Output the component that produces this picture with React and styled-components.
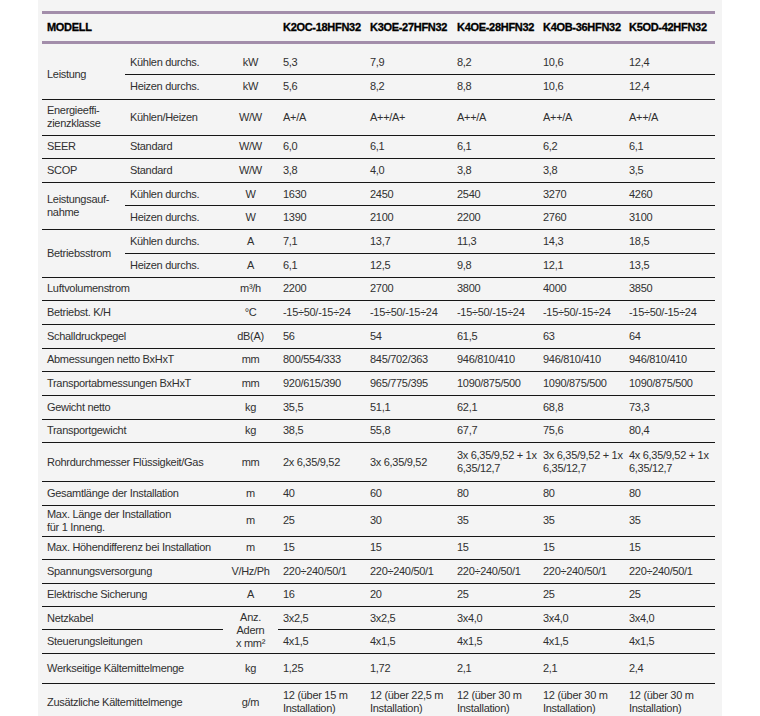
import React from 'react'
import styled, { createGlobalStyle } from 'styled-components'

const GlobalStyle = createGlobalStyle`
    * {
        box-sizing: border-box;
    }
    body {
        margin: 0;
        background: #fff;
        font-family: "Liberation Sans", Arial, sans-serif;
    }
`

const Panel = styled.div`
    margin-left: 38px;
    width: 684px;
    min-height: 100vh;
    background: #f4f4f4;
    padding: 11px 7px 0 4px;
`

const Table = styled.table`
    width: 100%;
    table-layout: fixed;
    border-collapse: separate;
    border-spacing: 0;
    font-size: 11px;
    line-height: 13px;
    letter-spacing: -0.3px;
    color: #303030;
`

const HeadRow = styled.tr`
    height: 33px;
`

const Th = styled.th`
    border-top: 3px solid #a28daa;
    border-bottom: 3px solid #a28daa;
    padding: 0 0 0 5px;
    text-align: left;
    font-weight: 700;
    color: #000;
    letter-spacing: -0.3px;
    -webkit-text-stroke: 0.3px #000;
    white-space: nowrap;
`

const Row = styled.tr`
    height: ${p => p.$h}px;
`

const Td = styled.td`
    border-bottom: 1px solid #161616;
    padding: ${p => (p.$first ? '6px' : '0')} 0 0 5px;
    vertical-align: middle;
    white-space: nowrap;
    text-align: ${p => (p.$center ? 'center' : 'left')};
    ${p => p.$center && 'padding-left: 0;'}
`

const models = ['K2OC-18HFN32', 'K3OE-27HFN32', 'K4OE-28HFN32', 'K4OB-36HFN32', 'K5OD-42HFN32']

const over = n => (
    <>
        12 (über {n} m
        <br />
        Installation)
    </>
)

const pipe = n => (
    <>
        {n}x 6,35/9,52 + 1x
        <br />
        6,35/12,7
    </>
)

const rows = [
    { label: 'Leistung', span: 2, sub: 'Kühlen durchs.', unit: 'kW', v: ['5,3', '7,9', '8,2', '10,6', '12,4'], h: 31, first: true },
    { sub: 'Heizen durchs.', unit: 'kW', v: ['5,6', '8,2', '8,8', '10,6', '12,4'], h: 24.5 },
    { label: <>Energieeffi-<br />zienzklasse</>, sub: 'Kühlen/Heizen', unit: 'W/W', v: ['A+/A', 'A++/A+', 'A++/A', 'A++/A', 'A++/A'], h: 36 },
    { label: 'SEER', sub: 'Standard', unit: 'W/W', v: ['6,0', '6,1', '6,1', '6,2', '6,1'], h: 23.5 },
    { label: 'SCOP', sub: 'Standard', unit: 'W/W', v: ['3,8', '4,0', '3,8', '3,8', '3,5'] },
    { label: <>Leistungsauf-<br />nahme</>, span: 2, sub: 'Kühlen durchs.', unit: 'W', v: ['1630', '2450', '2540', '3270', '4260'] },
    { sub: 'Heizen durchs.', unit: 'W', v: ['1390', '2100', '2200', '2760', '3100'] },
    { label: 'Betriebsstrom', span: 2, sub: 'Kühlen durchs.', unit: 'A', v: ['7,1', '13,7', '11,3', '14,3', '18,5'], h: 24 },
    { sub: 'Heizen durchs.', unit: 'A', v: ['6,1', '12,5', '9,8', '12,1', '13,5'], h: 23.5 },
    { label: 'Luftvolumenstrom', wide: true, unit: 'm³/h', v: ['2200', '2700', '3800', '4000', '3850'] },
    { label: 'Betriebst. K/H', wide: true, unit: '°C', v: Array(5).fill('-15÷50/-15÷24') },
    { label: 'Schalldruckpegel', wide: true, unit: 'dB(A)', v: ['56', '54', '61,5', '63', '64'] },
    { label: 'Abmessungen netto BxHxT', wide: true, unit: 'mm', v: ['800/554/333', '845/702/363', '946/810/410', '946/810/410', '946/810/410'] },
    { label: 'Transportabmessungen BxHxT', wide: true, unit: 'mm', v: ['920/615/390', '965/775/395', '1090/875/500', '1090/875/500', '1090/875/500'], h: 23.5 },
    { label: 'Gewicht netto', wide: true, unit: 'kg', v: ['35,5', '51,1', '62,1', '68,8', '73,3'] },
    { label: 'Transportgewicht', wide: true, unit: 'kg', v: ['38,5', '55,8', '67,7', '75,6', '80,4'] },
    { label: 'Rohrdurchmesser Flüssigkeit/Gas', wide: true, unit: 'mm', v: ['2x 6,35/9,52', '3x 6,35/9,52', pipe(3), pipe(3), pipe(4)], h: 39 },
    { label: 'Gesamtlänge der Installation', wide: true, unit: 'm', v: ['40', '60', '80', '80', '80'] },
    { label: <>Max. Länge der Installation<br />für 1 Inneng.</>, wide: true, unit: 'm', v: ['25', '30', '35', '35', '35'], h: 31 },
    { label: 'Max. Höhendifferenz bei Installation', wide: true, unit: 'm', v: ['15', '15', '15', '15', '15'], h: 23 },
    { label: 'Spannungsversorgung', wide: true, unit: 'V/Hz/Ph', v: Array(5).fill('220÷240/50/1') },
    { label: 'Elektrische Sicherung', wide: true, unit: 'A', v: ['16', '20', '25', '25', '25'] },
    { label: 'Netzkabel', wide: true, unit: <>Anz.<br />Adern<br />x mm²</>, unitSpan: 2, v: ['3x2,5', '3x2,5', '3x4,0', '3x4,0', '3x4,0'], h: 23 },
    { label: 'Steuerungsleitungen', wide: true, noUnit: true, v: Array(5).fill('4x1,5') },
    { label: 'Werkseitige Kältemittelmenge', wide: true, unit: 'kg', v: ['1,25', '1,72', '2,1', '2,1', '2,4'], h: 30 },
    { label: 'Zusätzliche Kältemittelmenge', wide: true, unit: 'g/m', v: [over(15), over('22,5'), over(30), over(30), over(30)], h: 38 },
]

const widths = [83, 98, 55, 87, 87, 86, 86, 91]

export default function App() {
    return (
        <>
            <GlobalStyle />
            <Panel>
                <Table>
                    <colgroup>
                        {widths.map((w, i) => (
                            <col key={i} style={{ width: w }} />
                        ))}
                    </colgroup>
                    <thead>
                        <HeadRow>
                            <Th colSpan={3}>MODELL</Th>
                            {models.map(m => (
                                <Th key={m}>{m}</Th>
                            ))}
                        </HeadRow>
                    </thead>
                    <tbody>
                        {rows.map((r, i) => (
                            <Row key={i} $h={r.h || 23.7}>
                                {r.label && (
                                    <Td
                                        $first={r.first}
                                        rowSpan={r.span || 1}
                                        colSpan={r.wide ? 2 : 1}
                                    >
                                        {r.label}
                                    </Td>
                                )}
                                {!r.wide && <Td $first={r.first}>{r.sub}</Td>}
                                {!r.noUnit && (
                                    <Td $first={r.first} $center rowSpan={r.unitSpan || 1}>
                                        {r.unit}
                                    </Td>
                                )}
                                {r.v.map((v, j) => (
                                    <Td key={j} $first={r.first}>
                                        {v}
                                    </Td>
                                ))}
                            </Row>
                        ))}
                    </tbody>
                </Table>
            </Panel>
        </>
    )
}
